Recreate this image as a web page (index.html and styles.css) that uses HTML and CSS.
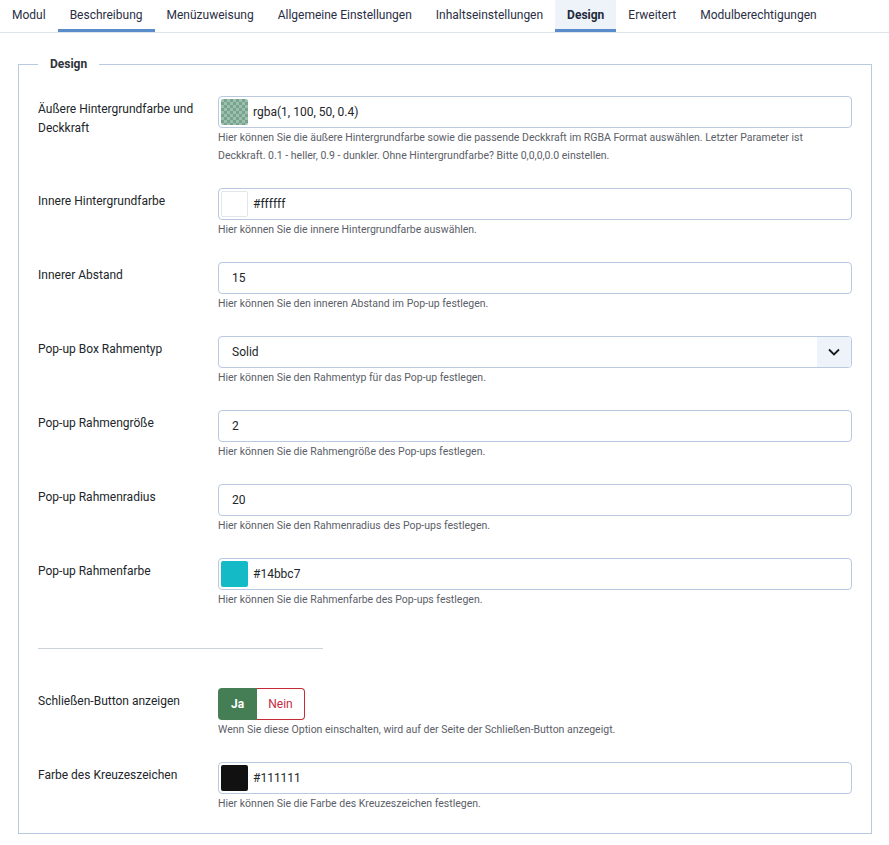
FILE: index.html
```html
<!DOCTYPE html>
<html lang="de">
<head>
<meta charset="utf-8">
<link rel="stylesheet" href="styles.css">
</head>
<body>
<nav class="tabs">
  <a class="tab">Modul</a>
  <a class="tab hover">Beschreibung</a>
  <a class="tab">Menüzuweisung</a>
  <a class="tab">Allgemeine Einstellungen</a>
  <a class="tab">Inhaltseinstellungen</a>
  <a class="tab active">Design</a>
  <a class="tab">Erweitert</a>
  <a class="tab">Modulberechtigungen</a>
</nav>
<div class="content">
<fieldset class="box">
  <legend>Design</legend>

  <div class="row">
    <label class="lbl">Äußere Hintergrundfarbe und Deckkraft</label>
    <div class="ctl">
      <div class="input color"><span class="swatch checker"><span class="fill" style="background: rgba(1,100,50,0.4)"></span></span><span>rgba(1, 100, 50, 0.4)</span></div>
      <div class="help">Hier können Sie die äußere Hintergrundfarbe sowie die passende Deckkraft im RGBA Format auswählen. Letzter Parameter ist Deckkraft. 0.1 - heller, 0.9 - dunkler. Ohne Hintergrundfarbe? Bitte 0,0,0,0.0 einstellen.</div>
    </div>
  </div>

  <div class="row">
    <label class="lbl">Innere Hintergrundfarbe</label>
    <div class="ctl">
      <div class="input color"><span class="swatch white"></span><span>#ffffff</span></div>
      <div class="help">Hier können Sie die innere Hintergrundfarbe auswählen.</div>
    </div>
  </div>

  <div class="row">
    <label class="lbl">Innerer Abstand</label>
    <div class="ctl">
      <div class="input">15</div>
      <div class="help">Hier können Sie den inneren Abstand im Pop-up festlegen.</div>
    </div>
  </div>

  <div class="row">
    <label class="lbl">Pop-up Box Rahmentyp</label>
    <div class="ctl">
      <div class="input select"><span class="val">Solid</span><span class="arrow"><svg width="12" height="8" viewBox="0 0 12 8"><path d="M1 1.5 L6 6.5 L11 1.5" fill="none" stroke="#1a1a1a" stroke-width="1.8"/></svg></span></div>
      <div class="help">Hier können Sie den Rahmentyp für das Pop-up festlegen.</div>
    </div>
  </div>

  <div class="row">
    <label class="lbl">Pop-up Rahmengröße</label>
    <div class="ctl">
      <div class="input">2</div>
      <div class="help">Hier können Sie die Rahmengröße des Pop-ups festlegen.</div>
    </div>
  </div>

  <div class="row">
    <label class="lbl">Pop-up Rahmenradius</label>
    <div class="ctl">
      <div class="input">20</div>
      <div class="help">Hier können Sie den Rahmenradius des Pop-ups festlegen.</div>
    </div>
  </div>

  <div class="row">
    <label class="lbl">Pop-up Rahmenfarbe</label>
    <div class="ctl">
      <div class="input color"><span class="swatch" style="background:#14bbc7"></span><span>#14bbc7</span></div>
      <div class="help">Hier können Sie die Rahmenfarbe des Pop-ups festlegen.</div>
    </div>
  </div>

  <hr class="sep">

  <div class="row">
    <label class="lbl">Schließen-Button anzeigen</label>
    <div class="ctl">
      <div class="switch"><span class="yes">Ja</span><span class="no">Nein</span></div>
      <div class="help">Wenn Sie diese Option einschalten, wird auf der Seite der Schließen-Button anzegeigt.</div>
    </div>
  </div>

  <div class="row last">
    <label class="lbl">Farbe des Kreuzeszeichen</label>
    <div class="ctl">
      <div class="input color"><span class="swatch" style="background:#111111"></span><span>#111111</span></div>
      <div class="help">Hier können Sie die Farbe des Kreuzeszeichen festlegen.</div>
    </div>
  </div>
</fieldset>
</div>
</body>
</html>
```

FILE: styles.css
```css
html, body {
  margin: 0;
  padding: 0;
  background: #fff;
}
body {
  font-family: Roboto, "Liberation Sans", sans-serif;
  color: #22262a;
  width: 889px;
}
.tabs {
  display: flex;
  height: 32px;
  border-bottom: 1px solid #dde4ee;
  padding-left: 0;
}
.tab {
  display: flex;
  align-items: center;
  padding: 0 12px;
  font-size: 12px;
  color: #2a2e45;
  height: 32px;
  box-sizing: border-box;
  border-bottom: 3px solid transparent;
  padding-top: 1px;
}
.tab.hover { border-bottom-color: #5a8bcb; }
.tab.active {
  border-bottom-color: #5a8bcb;
  background: #eef3fa;
  font-weight: 700;
  color: #1e2a3a;
}
.content {
  padding: 24px 17px 0 18px;
}
.box {
  margin: 0;
  border: 1px solid #b9c9e0;
  padding: 25px 19px 20px 19px;
  min-width: 0;
}
.box legend {
  font-size: 12px;
  font-weight: 700;
  color: #2f3337;
  padding: 0 12px;
  margin-left: 0;
}
.row {
  display: flex;
  margin-bottom: 23px;
}
.row.last { margin-bottom: 0; }
.lbl {
  width: 180px;
  flex: none;
  font-size: 12px;
  line-height: 19px;
  padding-top: 4px;
  padding-right: 20px;
  box-sizing: border-box;
  color: #22262a;
}
.ctl {
  flex: 1;
  min-width: 0;
}
.input {
  height: 32px;
  box-sizing: border-box;
  border: 1px solid #b9c9e0;
  border-radius: 4px;
  display: flex;
  align-items: center;
  padding: 0 13px;
  font-size: 12px;
  color: #22262a;
}
.input.color {
  padding: 2px;
  gap: 5px;
}
.swatch {
  width: 27px;
  height: 26px;
  border-radius: 2px;
  flex: none;
  position: relative;
  overflow: hidden;
}
.swatch.white {
  border: 1px solid #e2e6ea;
  box-sizing: border-box;
  background: #fff;
}
.swatch.checker {
  background-color: #fff;
  background-image:
    linear-gradient(45deg, #ccc 25%, transparent 25%, transparent 75%, #ccc 75%),
    linear-gradient(45deg, #ccc 25%, transparent 25%, transparent 75%, #ccc 75%);
  background-size: 6px 6px;
  background-position: 0 0, 3px 3px;
}
.swatch .fill {
  position: absolute;
  inset: 0;
}
.input.select {
  padding: 0 0 0 13px;
  justify-content: space-between;
}
.arrow {
  width: 34px;
  height: 30px;
  background: #eef3fa;
  display: flex;
  align-items: center;
  justify-content: center;
  border-radius: 0 3px 3px 0;
}
.help {
  font-size: 10.5px;
  line-height: 18px;
  color: #5b6068;
  padding-top: 1px;
}
.sep {
  width: 285px;
  margin: 39px 0 39px 0;
  border: 0;
  border-top: 1px solid #cdd3da;
}
.switch {
  display: flex;
  height: 32px;
  width: 87px;
  font-size: 12px;
}
.switch span {
  display: flex;
  align-items: center;
  justify-content: center;
  box-sizing: border-box;
}
.switch .yes {
  width: 39px;
  background: #457d54;
  color: #fff;
  font-weight: 700;
  border-radius: 4px 0 0 4px;
}
.switch .no {
  width: 48px;
  border: 1px solid #c52a36;
  border-left: 0;
  color: #c52a3e;
  border-radius: 0 4px 4px 0;
}
```
